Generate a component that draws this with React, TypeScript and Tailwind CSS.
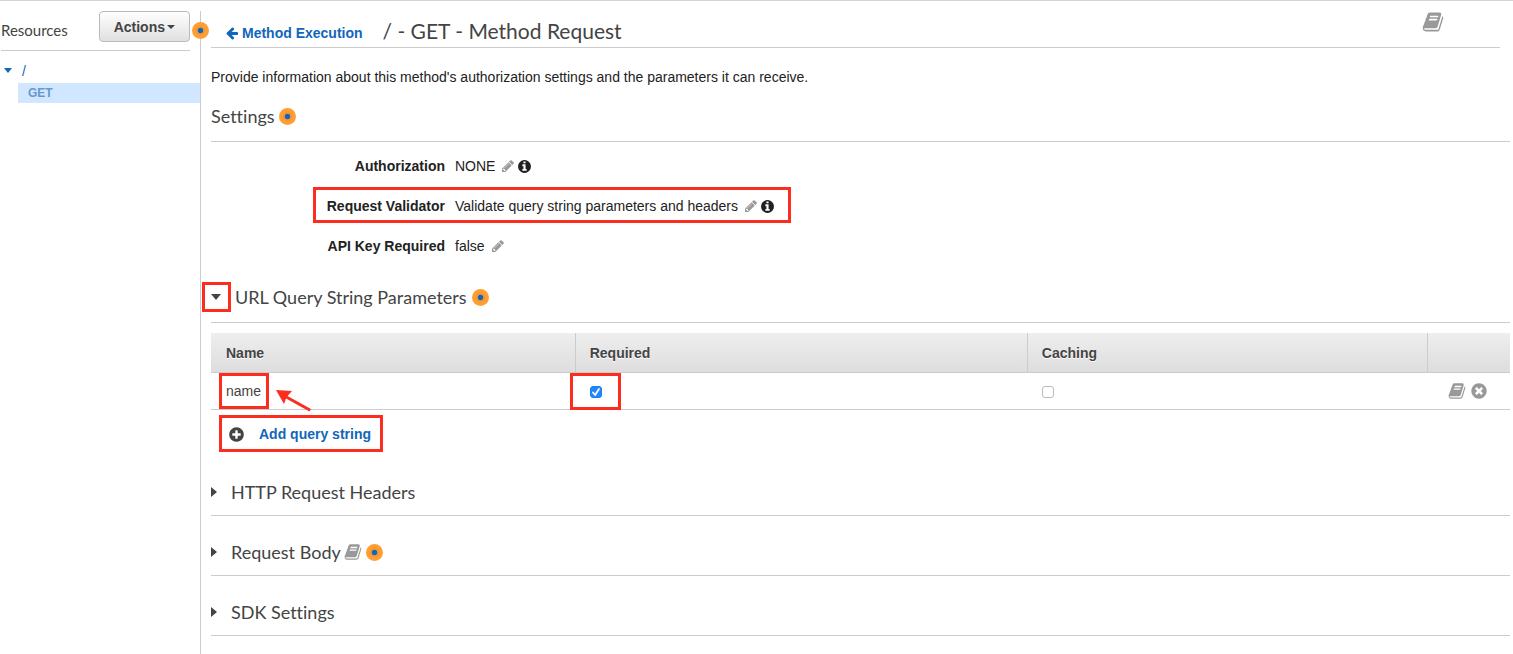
import type { ReactNode } from "react";

const DISC =
  "q0 209-103 385.500t-279.500 279.500-385.500 103-385.500-103-279.500-279.500-103-385.500 103-385.500 279.500-279.500 385.500-103 385.500 103 279.500 279.500 103 385.500z";

const ICONS = {
  book: "M1703 478q40 57 18 129l-275 906q-19 64-76.5 107.500t-122.500 43.500h-923q-77 0-148.500-53.500t-99.500-131.500q-24-67-2-127 0-4 3-27t4-37q1-8-3-21.500t-3-19.500q2-11 8-21t16.500-23.500 16.500-23.500q23-38 45-91.500t30-91.500q3-10 .5-30t-.5-28q3-11 17-28t17-23q21-36 42-92t25-90q1-9-2.500-32t.5-28q4-13 22-30.500t22-22.500q19-26 42.500-84.500t27.500-96.500q1-8-3-25.500t-2-26.500q2-8 9-18t18-23 17-21q8-12 16.500-30.500t15-35 16-36 19.500-32 26.500-23.500 36-11.500 47.500 5.500l-1 3q38-9 51-9h761q74 0 114 56t18 130l-274 906q-36 119-71.500 153.500t-128.500 34.500h-869q-27 0-38 15-11 16-1 43 24 70 144 70h923q29 0 56-15.500t35-41.500l300-987q7-22 5-57 38 15 59 43zm-1064 2q-4 13 2 22.500t20 9.500h608q13 0 25.500-9.500t16.500-22.500l21-64q4-13-2-22.500t-20-9.500h-608q-13 0-25.500 9.500t-16.500 22.500zm-83 256q-4 13 2 22.500t20 9.500h608q13 0 25.500-9.500t16.500-22.500l21-64q4-13-2-22.500t-20-9.500h-608q-13 0-25.500 9.500t-16.500 22.500z",
  info:
    "M1152 1376v-160q0-14-9-23t-23-9h-96v-512q0-14-9-23t-23-9h-320q-14 0-23 9t-9 23v160q0 14 9 23t23 9h96v320h-96q-14 0-23 9t-9 23v160q0 14 9 23t23 9h448q14 0 23-9t9-23zm-128-896v-160q0-14-9-23t-23-9h-192q-14 0-23 9t-9 23v160q0 14 9 23t23 9h192q14 0 23-9t9-23zm640 416" +
    DISC,
  plus:
    "M1344 960v-128q0-26-19-45t-45-19h-256v-256q0-26-19-45t-45-19h-128q-26 0-45 19t-19 45v256h-256q-26 0-45 19t-19 45v128q0 26 19 45t45 19h256v256q0 26 19 45t45 19h128q26 0 45-19t19-45v-256h256q26 0 45-19t19-45zm320-64" +
    DISC,
  remove:
    "M1277 1122q0-26-19-45l-181-181 181-181q19-19 19-45 0-27-19-46l-90-90q-19-19-46-19-26 0-45 19l-181 181-181-181q-19-19-45-19-27 0-46 19l-90 90q-19 19-19 46 0 26 19 45l181 181-181 181q-19 19-19 45 0 27 19 46l90 90q19 19 46 19 26 0 45-19l181-181 181 181q19 19 45 19 27 0 46-19l90-90q19-19 19-46zm387-226" +
    DISC,
  pencil:
    "M491 1536l91-91-235-235-91 91v107h128v128h107zm523-928q0-22-22-22-10 0-17 7l-542 542q-7 7-7 17 0 22 22 22 10 0 17-7l542-542q7-7 7-17zm-54-192l416 416-832 832h-416v-416zm683 96q0 53-37 90l-166 166-416-416 166-165q36-38 90-38 53 0 91 38l235 234q37 39 37 91z",
  back: "M1664 896v128q0 53-32.500 90.500t-84.500 37.500h-704l293 294q38 36 38 90t-38 90l-75 76q-37 37-90 37-52 0-91-37l-651-652q-37-37-37-90 0-52 37-91l651-650q38-38 91-38 52 0 90 38l75 74q38 38 38 91t-38 91l-293 293h704q52 0 84.500 37.500t32.500 90.500z",
};

function Icon({ name, className }: { name: keyof typeof ICONS; className: string }) {
  return (
    <svg viewBox="0 0 1792 1792" fill="currentColor" aria-hidden="true" className={`shrink-0 ${className}`}>
      <path d={ICONS[name]} />
    </svg>
  );
}

function Beacon({ className = "" }: { className?: string }) {
  return (
    <svg viewBox="0 0 17 17" aria-hidden="true" className={`size-[17px] shrink-0 ${className}`}>
      <circle cx="8.5" cy="8.5" r="8.500" fill="#ff9f33" />
      <circle cx="8.5" cy="8.5" r="5" fill="#f59733" />
      <circle cx="8.5" cy="8.5" r="2.700" fill="#1166bb" />
    </svg>
  );
}

function CaretDown({ className = "" }: { className?: string }) {
  return (
    <svg
      viewBox="0 0 10 6"
      preserveAspectRatio="none"
      fill="currentColor"
      aria-hidden="true"
      className={`shrink-0 ${className}`}
    >
      <path d="M0 0h10L5 6z" />
    </svg>
  );
}

function CaretRight() {
  return (
    <svg viewBox="0 0 6 10" fill="currentColor" aria-hidden="true" className="h-[10px] w-[6px] shrink-0">
      <path d="M0 0l6 5-6 5z" />
    </svg>
  );
}

/* Red frame drawn around a highlighted part of the page. */
function Frame({ className }: { className: string }) {
  return <span aria-hidden="true" className={`pointer-events-none absolute border-3 border-[#fc2d1f] ${className}`} />;
}

function Setting({
  label,
  value,
  info = false,
  framed = false,
}: {
  label: string;
  value: string;
  info?: boolean;
  framed?: boolean;
}) {
  return (
    <div className="flex h-10 items-center">
      <dt className="w-[234px] text-right font-bold">{label}</dt>
      <dd className="relative ml-[10px] flex items-center">
        {value}
        <button type="button" aria-label={`Edit ${label}`} className="ml-[6px] text-[#999]">
          <Icon name="pencil" className="size-[14px]" />
        </button>
        {info && (
          <button type="button" aria-label={`About ${label}`} className="ml-0.5 text-[#222]">
            <Icon name="info" className="size-[15px]" />
          </button>
        )}
        {framed && <Frame className="-top-[10px] -right-4 -bottom-[8px] -left-[142px]" />}
      </dd>
    </div>
  );
}

const HEADING =
  "flex items-center font-[Lato,sans-serif] text-lg leading-[22px] text-[#444] [font-variant-ligatures:none]";

function CollapsedSection({ title, children }: { title: string; children?: ReactNode }) {
  return (
    <section className="border-b border-[#ccc] pt-[25px] pb-3">
      <h2 className={HEADING}>
        <button type="button" aria-expanded="false" className="flex items-center gap-[14px]">
          <CaretRight />
          {title}
        </button>
        {children}
      </h2>
    </section>
  );
}

const TH =
  "border-b border-l border-[#ccc] px-[14px] text-left font-bold text-[#444] [text-shadow:0_1px_0_#fff] first:border-l-0 first:pl-[15px]";
const TD = "border-b border-[#ccc] px-[15px]";
const CHECKBOX =
  "block size-3 appearance-none rounded-[3px] border border-[#bbb] bg-white";

export default function App() {
  return (
    <div className="flex min-h-screen border-t border-[#d5d5d5] bg-white pt-[10px] font-['Liberation_Sans',Arial,sans-serif] text-sm leading-[18px] text-[#222]">
      <aside className="relative w-[201px] shrink-0 border-r border-[#ccc]">
        <div className="mr-[10px] ml-px flex h-10 items-start justify-between border-b border-[#ccc]">
          <h2 className="pt-[10px] font-[Lato,sans-serif] text-[15px] text-[#444]">Resources</h2>
          <button
            type="button"
            className="flex h-[31px] items-center gap-0.5 rounded-[4px] border border-[#bbb] bg-linear-to-b from-white to-[#e0e0e0] px-[14px] font-bold text-[#444]"
          >
            Actions
            <CaretDown className="mt-px h-1 w-2" />
          </button>
        </div>
        <Beacon className="absolute top-[11px] -right-[9px]" />
        <nav aria-label="Resources" className="pt-[9px] text-[#1166bb]">
          <a href="#root" className="mb-0.5 flex h-[21px] items-center gap-[10px] pl-1">
            <CaretDown className="h-[5px] w-2" />/
          </a>
          <a
            href="#get"
            className="ml-[18px] flex h-5 items-center bg-[#d1e7ff] pl-[10px] text-xs font-bold text-[#6699cc]"
          >
            GET
          </a>
        </nav>
      </aside>

      <main className="min-w-0 flex-1 pr-[3px] pl-[10px]">
        <header className="mr-[10px] flex h-[37px] items-center border-b border-[#ccc]">
          <a href="#method" className="ml-[14px] flex items-center gap-[3px] pt-2 font-bold text-[#1166bb]">
            <Icon name="back" className="size-[14px]" />
            Method Execution
          </a>
          <h1 className="ml-5 pt-1 font-[Lato,sans-serif] text-[21px] leading-[26px] text-[#444]">
            / - GET - Method Request
          </h1>
          <button type="button" aria-label="Documentation" className="mr-14 mb-[14px] ml-auto text-[#999]">
            <Icon name="book" className="size-[22px]" />
          </button>
        </header>

        <p className="pt-5">
          Provide information about this method's authorization settings and the parameters it can receive.
        </p>

        <section>
          <div className="border-b border-[#ccc] pt-[19px] pb-[14px]">
            <h2 className={HEADING}>
              Settings
              <Beacon className="ml-1" />
            </h2>
          </div>
          <dl className="pt-1">
            <Setting label="Authorization" value="NONE" info />
            <Setting label="Request Validator" value="Validate query string parameters and headers" info framed />
            <Setting label="API Key Required" value="false" />
          </dl>
        </section>

        <section>
          <div className="border-b border-[#ccc] pt-5 pb-[14px]">
            <h2 className={HEADING}>
              <button type="button" aria-expanded="true" className="relative flex items-center gap-[14px]">
                <CaretDown className="h-[6px] w-[10px]" />
                URL Query String Parameters
                <Frame className="-top-1 -bottom-1 -left-[9px] w-[29px]" />
              </button>
              <Beacon className="ml-[5px]" />
            </h2>
          </div>

          <table className="mt-[10px] w-full table-fixed border-separate border-spacing-0">
            <thead>
              <tr className="h-10 bg-linear-to-b from-[#eee] to-[#ddd]">
                <th scope="col" className={`w-[28%] ${TH}`}>
                  Name
                </th>
                <th scope="col" className={`w-[34.8%] ${TH}`}>
                  Required
                </th>
                <th scope="col" className={`w-[30.8%] ${TH}`}>
                  Caching
                </th>
                <th scope="col" aria-label="Actions" className={TH} />
              </tr>
            </thead>
            <tbody>
              <tr className="h-[37px] text-[#444]">
                <td className={TD}>
                  <span className="relative">
                    name
                    <Frame className="-top-[10px] -right-2 -bottom-[10px] -left-[7px]" />
                    <svg
                      viewBox="0 0 35 22"
                      aria-hidden="true"
                      className="pointer-events-none absolute top-[7px] left-[50px] h-[22px] w-[35px]"
                    >
                      <path d="M0 0l16 1-4.500 5 23.500 13-1.500 2.600-23.500-13-2 5.400z" fill="#fc2d1f" />
                    </svg>
                  </span>
                </td>
                <td className={`pt-0.5 ${TD}`}>
                  <span className="relative block w-3">
                    <input
                      type="checkbox"
                      defaultChecked
                      aria-label="Required"
                      className={`${CHECKBOX} peer checked:border-[#1a7ff5] checked:bg-[#1f86fb]`}
                    />
                    <svg
                      viewBox="0 0 12 12"
                      fill="none"
                      stroke="white"
                      strokeWidth="1.800"
                      strokeLinecap="round"
                      strokeLinejoin="round"
                      aria-hidden="true"
                      className="pointer-events-none absolute inset-0 hidden size-3 peer-checked:block"
                    >
                      <path d="M3 6.500l2.200 2.500L9 3" />
                    </svg>
                    <Frame className="-top-[13px] -right-[19px] -bottom-[12px] -left-[20px]" />
                  </span>
                </td>
                <td className={`pt-0.5 ${TD}`}>
                  <input type="checkbox" aria-label="Caching" className={CHECKBOX} />
                </td>
                <td className={TD}>
                  <div className="flex items-center justify-end gap-1 pr-[7px] text-[#999]">
                    <button type="button" aria-label="Documentation for name">
                      <Icon name="book" className="size-[18px]" />
                    </button>
                    <button type="button" aria-label="Remove name">
                      <Icon name="remove" className="size-[18px]" />
                    </button>
                  </div>
                </td>
              </tr>
            </tbody>
          </table>

          <div className="flex h-[46px] items-center pt-0.5 pl-[17px]">
            <button type="button" className="relative flex items-center gap-[14px] font-bold text-[#1166bb]">
              <Icon name="plus" className="size-[17px] text-[#444]" />
              Add query string
              <Frame className="-top-[10px] -right-3 -bottom-[9px] -left-[9px]" />
            </button>
          </div>
        </section>

        <CollapsedSection title="HTTP Request Headers" />
        <CollapsedSection title="Request Body">
          <button type="button" aria-label="Request body documentation" className="ml-[3px] text-[#999]">
            <Icon name="book" className="size-[18px]" />
          </button>
          <Beacon className="ml-1" />
        </CollapsedSection>
        <CollapsedSection title="SDK Settings" />
      </main>
    </div>
  );
}
